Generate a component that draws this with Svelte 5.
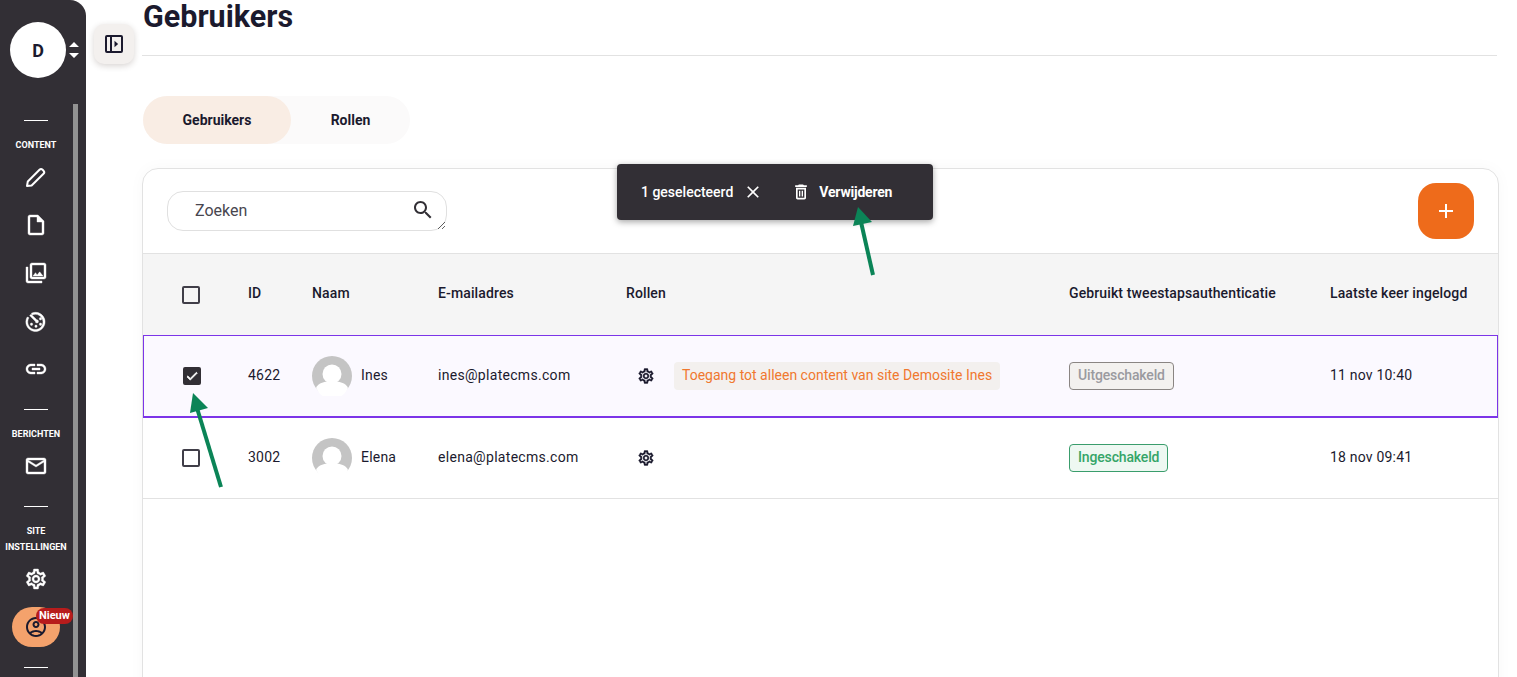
<script lang="ts">
  const icons = {
    file: 'M14 2H6c-1.1 0-1.99.9-1.99 2L4 20c0 1.1.89 2 1.99 2H18c1.1 0 2-.9 2-2V8l-6-6zM6 20V4h7v5h5v11H6z',
    photos: 'M20 4v12H8V4h12m0-2H8c-1.1 0-2 .9-2 2v12c0 1.1.9 2 2 2h12c1.1 0 2-.9 2-2V4c0-1.1-.9-2-2-2zm-8.5 9.67l1.69 2.26 2.48-3.1L19 15H9zM2 6v14c0 1.1.9 2 2 2h14v-2H4V6H2z',
    speed: 'M7.4 4.2A9.6 9.6 0 1 1 3.2 8l1.8.8A7.6 7.6 0 1 0 8.3 6zM5.6 6.6l1.5-1.4 5.7 5.6a1.6 1.6 0 1 1-1.5 1.5zM7.5 14a1.2 1.2 0 1 1 0 2.4 1.2 1.2 0 0 1 0-2.4zM12 16a1.2 1.2 0 1 1 0 2.4 1.2 1.2 0 0 1 0-2.4zM16.5 14a1.2 1.2 0 1 1 0 2.4 1.2 1.2 0 0 1 0-2.4zM16.5 8.6a1.2 1.2 0 1 1 0 2.4 1.2 1.2 0 0 1 0-2.4z',
    link: 'M3.9 12c0-1.71 1.39-3.1 3.1-3.1h4V7H7c-2.76 0-5 2.24-5 5s2.24 5 5 5h4v-1.9H7c-1.71 0-3.1-1.39-3.1-3.1zM8 13h8v-2H8v2zm9-6h-4v1.9h4c1.71 0 3.1 1.39 3.1 3.1s-1.39 3.1-3.1 3.1h-4V17h4c2.76 0 5-2.24 5-5s-2.24-5-5-5z',
    mail: 'M20 4H4c-1.1 0-1.99.9-1.99 2L2 18c0 1.1.9 2 2 2h16c1.1 0 2-.9 2-2V6c0-1.1-.9-2-2-2zm0 14H4V8l8 5 8-5v10zm-8-7L4 6h16l-8 5z',
    gear: 'M19.43 12.98c.04-.32.07-.64.07-.98 0-.34-.03-.66-.07-.98l2.11-1.65c.19-.15.24-.42.12-.64l-2-3.46c-.09-.16-.26-.25-.44-.25-.06 0-.12.01-.17.03l-2.49 1c-.52-.4-1.08-.73-1.69-.98l-.38-2.65C14.46 2.18 14.25 2 14 2h-4c-.25 0-.46.18-.49.42l-.38 2.65c-.61.25-1.17.59-1.69.98l-2.49-1c-.06-.02-.12-.03-.18-.03-.17 0-.34.09-.43.25l-2 3.46c-.13.22-.07.49.12.64l2.11 1.65c-.04.32-.07.65-.07.98 0 .33.03.66.07.98l-2.11 1.65c-.19.15-.24.42-.12.64l2 3.46c.09.16.26.25.44.25.06 0 .12-.01.17-.03l2.49-1c.52.4 1.08.73 1.69.98l.38 2.65c.03.24.24.42.49.42h4c.25 0 .46-.18.49-.42l.38-2.65c.61-.25 1.17-.59 1.69-.98l2.49 1c.06.02.12.03.18.03.17 0 .34-.09.43-.25l2-3.46c.12-.22.07-.49-.12-.64l-2.11-1.65zm-1.98-1.71c.04.31.05.52.05.73 0 .21-.02.43-.05.73l-.14 1.13.89.7 1.08.84-.7 1.21-1.27-.51-1.04-.42-.9.68c-.43.32-.84.56-1.25.73l-1.06.43-.16 1.13-.2 1.35h-1.4l-.19-1.35-.16-1.13-1.06-.43c-.43-.18-.83-.41-1.23-.71l-.91-.7-1.06.43-1.27.51-.7-1.21 1.08-.84.89-.7-.14-1.13c-.03-.31-.05-.54-.05-.74s.02-.43.05-.73l.14-1.13-.89-.7-1.08-.84.7-1.21 1.27.51 1.04.42.9-.68c.43-.32.84-.56 1.25-.73l1.06-.43.16-1.13.2-1.35h1.39l.19 1.35.16 1.13 1.06.43c.43.18.83.41 1.23.71l.91.7 1.06-.43 1.27-.51.7 1.21-1.07.85-.89.7.14 1.13zM12 8c-2.21 0-4 1.79-4 4s1.79 4 4 4 4-1.79 4-4-1.79-4-4-4zm0 6c-1.1 0-2-.9-2-2s.9-2 2-2 2 .9 2 2-.9 2-2 2z',
    account: 'M12 2C6.48 2 2 6.48 2 12s4.48 10 10 10 10-4.48 10-10S17.52 2 12 2zM7.35 18.5C8.66 17.56 10.26 17 12 17s3.34.56 4.65 1.5c-1.31.94-2.91 1.5-4.65 1.5s-3.34-.56-4.65-1.5zm10.79-1.38C16.45 15.8 14.32 15 12 15s-4.45.8-6.14 2.12C4.7 15.73 4 13.95 4 12c0-4.42 3.58-8 8-8s8 3.58 8 8c0 1.95-.7 3.73-1.86 5.12zM12 6c-1.93 0-3.5 1.57-3.5 3.5S10.07 13 12 13s3.5-1.57 3.5-3.5S13.93 6 12 6zm0 5c-.83 0-1.5-.67-1.5-1.5S11.17 8 12 8s1.5.67 1.5 1.5S12.83 11 12 11z',
    search: 'M15.5 14h-.79l-.28-.27C15.41 12.59 16 11.11 16 9.5 16 5.91 13.09 3 9.5 3S3 5.91 3 9.5 5.91 16 9.5 16c1.61 0 3.09-.59 4.23-1.57l.27.28v.79l5 4.99L20.49 19l-4.99-5zm-6 0C7.01 14 5 11.99 5 9.5S7.01 5 9.5 5 14 7.01 14 9.5 11.99 14 9.5 14z',
    trash: 'M16 9v10H8V9h8m-1.5-6h-5l-1 1H5v2h14V4h-3.5l-1-1zM18 7H6v12c0 1.1.9 2 2 2h8c1.1 0 2-.9 2-2V7zM9.6 10.5h1.6v7H9.6zM12.8 10.5h1.6v7h-1.6z',
    close: 'M19 6.41L17.59 5 12 10.59 6.41 5 5 6.41 10.59 12 5 17.59 6.41 19 12 13.41 17.59 19 19 17.59 13.41 12z',
    check: 'M9 16.2L4.8 12l-1.4 1.4L9 19 21 7l-1.4-1.4L9 16.2z',
  };

  const groups = [
    { label: ['CONTENT'], items: ['edit', 'file', 'photos', 'speed', 'link'] },
    { label: ['BERICHTEN'], items: ['mail'] },
    { label: ['SITE', 'INSTELLINGEN'], items: ['gear'] },
  ];

  const users = [
    { id: 4622, name: 'Ines', email: 'ines@platecms.com', role: 'Toegang tot alleen content van site Demosite Ines', tfa: false, last: '11 nov 10:40', selected: true },
    { id: 3002, name: 'Elena', email: 'elena@platecms.com', role: '', tfa: true, last: '18 nov 09:41', selected: false },
  ];
</script>

{#snippet icon(name, size = 24)}
  <svg class="icon" width={size} height={size} viewBox="0 0 24 24" fill="currentColor"><path d={icons[name]} /></svg>
{/snippet}

<div class="page">
  <aside class="sidebar">
    <div class="site">
      <div class="site-avatar">D</div>
      <svg class="sort" width="12" height="24" viewBox="0 0 12 24" fill="currentColor">
        <path d="M6 4l5 5H1zM1 15h10l-5 5z" />
      </svg>
    </div>
    <div class="side-body">
      <nav class="nav">
        {#each groups as group}
          <div class="rule"></div>
          <div class="group-label">
            {#each group.label as line}<div>{line}</div>{/each}
          </div>
          {#each group.items as item}
            <div class="nav-item">
              {#if item === 'edit'}
                <svg class="icon" width="24" height="24" viewBox="0 0 24 24" fill="none" stroke="currentColor" stroke-width="2" stroke-linejoin="round">
                  <path d="M3 21l.8-4.5L15.5 4.8a2.2 2.2 0 0 1 3.1 0l.9.9a2.2 2.2 0 0 1 0 3.1L7.6 20.5z" />
                </svg>
              {:else}
                {@render icon(item)}
              {/if}
            </div>
          {/each}
        {/each}
        <div class="nav-account">
          {@render icon('account')}
          <span class="new-badge">Nieuw</span>
        </div>
        <div class="rule last"></div>
      </nav>
      <div class="thumb"></div>
    </div>
  </aside>

  <button class="toggle" aria-label="Zijbalk">
    <svg width="20" height="20" viewBox="0 0 20 20" fill="none" stroke="currentColor" stroke-width="2">
      <rect x="2" y="2" width="16" height="16" rx="1" />
      <path d="M7 2v16" />
      <path d="M10.5 6.8l3.6 3.2-3.6 3.2z" fill="currentColor" stroke="none" />
    </svg>
  </button>

  <main class="main">
    <h1>Gebruikers</h1>
    <div class="tabs">
      <div class="tab active">Gebruikers</div>
      <div class="tab">Rollen</div>
    </div>

    <section class="card">
      <div class="card-top">
        <div class="search">
          <textarea placeholder="Zoeken" rows="1"></textarea>
          <span class="search-icon">{@render icon('search')}</span>
        </div>
        <button class="add" aria-label="Toevoegen">
          <svg width="16" height="16" viewBox="0 0 16 16" fill="none" stroke="currentColor" stroke-width="2"><path d="M8 1v14M1 8h14" /></svg>
        </button>
      </div>

      <div class="row head">
        <div><span class="checkbox"></span></div>
        <div class="txt">ID</div>
        <div class="txt">Naam</div>
        <div class="txt">E-mailadres</div>
        <div class="txt">Rollen</div>
        <div class="txt">Gebruikt tweestapsauthenticatie</div>
        <div class="txt">Laatste keer ingelogd</div>
      </div>

      {#each users as user}
        <div class="row body" class:selected={user.selected}>
          <div>
            {#if user.selected}
              <span class="checkbox checked">{@render icon('check', 14)}</span>
            {:else}
              <span class="checkbox"></span>
            {/if}
          </div>
          <div class="txt">{user.id}</div>
          <div class="name">
            <svg class="avatar" width="40" height="40" viewBox="0 0 40 40">
              <circle cx="20" cy="20" r="20" fill="#c4c4c4" />
              <circle cx="20" cy="18" r="9.5" fill="#fff" />
              <path d="M4 32c2-5 9-7 16-7s14 2 16 7a21 21 0 0 1-4 6l-4 3H12l-4-3z" fill="#fff" />
            </svg>
            <span class="txt">{user.name}</span>
          </div>
          <div class="txt email">{user.email}</div>
          <div class="roles">
            <span class="role-gear">{@render icon('gear', 18)}</span>
            {#if user.role}<span class="role-tag">{user.role}</span>{/if}
          </div>
          <div>
            <span class="status" class:on={user.tfa}>{user.tfa ? 'Ingeschakeld' : 'Uitgeschakeld'}</span>
          </div>
          <div class="txt">{user.last}</div>
        </div>
      {/each}
    </section>
  </main>

  <div class="bulk">
    <span class="bulk-count">1 geselecteerd</span>
    <span class="bulk-close">{@render icon('close', 20)}</span>
    <span class="bulk-trash">{@render icon('trash', 20)}</span>
    <span class="bulk-delete">Verwijderen</span>
  </div>

  <!-- annotation arrows -->
  <svg class="arrows" width="1517" height="677" viewBox="0 0 1517 677" fill="#0b8457">
    <path d="M873 275L861 222" stroke="#0b8457" stroke-width="4" />
    <polygon points="858,207 853,226 872,222" />
    <path d="M221 487L197 408" stroke="#0b8457" stroke-width="4" />
    <polygon points="193,393 190,413 208,408" />
  </svg>
</div>

<style>
  :global(body) {
    margin: 0;
    background: #fff;
  }

  .page {
    position: relative;
    display: flex;
    height: 677px;
    overflow: hidden;
    font-family: Roboto, sans-serif;
    font-size: 14px;
    color: #1b1a2e;
  }

  .icon {
    display: block;
  }

  .sidebar {
    flex: none;
    display: flex;
    flex-direction: column;
    width: 86px;
    background: #322f35;
    color: #fff;
    border-top-right-radius: 16px;
  }

  .site {
    flex: none;
    display: flex;
    align-items: center;
    height: 56px;
    padding: 22px 0 26px 10px;
    gap: 2px;
  }

  .site-avatar {
    display: flex;
    align-items: center;
    justify-content: center;
    width: 56px;
    height: 56px;
    border-radius: 50%;
    background: #fff;
    color: #1b1a2e;
    font-size: 18px;
    font-weight: 700;
  }

  .side-body {
    flex: 1;
    display: flex;
    min-height: 0;
  }

  .nav {
    width: 72px;
    margin-right: 1px;
    display: flex;
    flex-direction: column;
    align-items: center;
  }

  .thumb {
    width: 5px;
    background: #929292;
  }

  .rule {
    flex: none;
    width: 24px;
    height: 1px;
    margin-top: 16px;
    background: #fff;
  }

  .rule.last {
    margin-top: 20px;
  }

  .group-label {
    margin-top: 16px;
    font-size: 9px;
    line-height: 16px;
    font-weight: 700;
    text-align: center;
    white-space: nowrap;
  }

  .nav-item {
    flex: none;
    display: flex;
    align-items: center;
    justify-content: center;
    height: 48px;
    width: 48px;
  }

  .nav-item .icon path {
    stroke: currentColor;
    stroke-width: 0.4;
  }

  .nav-item svg[fill='none'] path {
    stroke-width: 2;
  }

  .nav-account {
    position: relative;
    flex: none;
    display: flex;
    align-items: center;
    justify-content: center;
    width: 48px;
    height: 40px;
    margin-top: 4px;
    border-radius: 20px;
    background: #f4a26c;
    color: #1b1a2e;
  }

  .new-badge {
    position: absolute;
    top: 1px;
    left: 24px;
    height: 16px;
    padding: 0 3px;
    border-radius: 8px;
    background: #b71c1c;
    color: #fff;
    font-size: 11px;
    line-height: 16px;
    font-weight: 700;
  }

  .toggle {
    flex: none;
    align-self: flex-start;
    display: flex;
    align-items: center;
    justify-content: center;
    width: 40px;
    height: 40px;
    margin: 24px 0 0 8px;
    padding: 0;
    border: 0;
    border-radius: 10px;
    background: #f3f0ee;
    color: #1b1a2e;
    box-shadow: 0 2px 6px rgba(60, 40, 30, 0.2);
  }

  .main {
    flex: 1;
    min-width: 0;
    padding: 0 20px 0 8px;
  }

  h1 {
    margin: 0;
    height: 55px;
    border-bottom: 1px solid #e2e2e2;
    padding-left: 1px;
    font-size: 30.5px;
    line-height: 34px;
    font-weight: 700;
  }

  .tabs {
    display: flex;
    width: 267px;
    margin-top: 40px;
    margin-left: 1px;
    border-radius: 24px;
    background: #fbfafa;
  }

  .tab {
    width: 119px;
    height: 48px;
    display: flex;
    align-items: center;
    justify-content: center;
    font-weight: 700;
  }

  .tab.active {
    width: 148px;
    border-radius: 24px;
    background: #f9ede4;
  }

  .card {
    width: 1355px;
    height: 600px;
    margin-top: 24px;
    border: 1px solid #e2e2e2;
    border-radius: 16px;
    box-shadow: 0 0 16px rgba(0, 0, 0, 0.03);
  }

  .card-top {
    display: flex;
    align-items: center;
    justify-content: space-between;
    height: 84px;
    padding: 0 24px;
    border-bottom: 1px solid #e2e2e2;
  }

  .search {
    position: relative;
    width: 280px;
    height: 40px;
  }

  textarea {
    box-sizing: border-box;
    display: block;
    width: 280px;
    height: 40px;
    padding: 9px 44px 9px 27px;
    border: 1px solid #e0e0e0;
    border-radius: 16px;
    background: #fff;
    font: 16px/20px Roboto, sans-serif;
    color: #1b1a2e;
    outline: none;
  }

  textarea::placeholder {
    color: #48464f;
  }

  .search-icon {
    position: absolute;
    top: 7px;
    right: 12px;
    color: #322f35;
  }

  .add {
    display: flex;
    align-items: center;
    justify-content: center;
    width: 56px;
    height: 56px;
    padding: 0;
    border: 0;
    border-radius: 18px;
    background: #ee6b1b;
    color: #fff;
  }

  .row {
    box-sizing: border-box;
    display: grid;
    grid-template-columns: 66px 64px 126px 188px 443px 261px 1fr;
    align-items: center;
    padding-left: 39px;
  }

  .row.head {
    height: 81px;
    background: #f5f5f5;
    font-weight: 500;
    letter-spacing: 0.12px;
  }

  .row.head .txt {
    padding-bottom: 3px;
  }

  .row.body {
    height: 81px;
    border-bottom: 1px solid #e2e2e2;
    letter-spacing: 0.2px;
  }

  .row.body .txt {
    padding-bottom: 2px;
  }

  .row.body .email {
    letter-spacing: 0.3px;
  }

  .row.selected {
    height: 83px;
    padding-left: 38px;
    border: 1px solid #7c35e8;
    border-bottom-width: 2px;
    background: #fbf9ff;
  }

  .checkbox {
    box-sizing: border-box;
    display: block;
    width: 18px;
    height: 18px;
    border: 2px solid #403e48;
    border-radius: 2px;
  }

  .checkbox.checked {
    display: flex;
    align-items: center;
    justify-content: center;
    margin-left: 1px;
    background: #322f35;
    border-color: #322f35;
    color: #fff;
  }

  .checkbox.checked path {
    stroke: currentColor;
    stroke-width: 1.5;
  }

  .name {
    display: flex;
    align-items: center;
    gap: 9px;
  }

  .avatar {
    flex: none;
  }

  .roles {
    display: flex;
    align-items: center;
    letter-spacing: 0;
  }

  .role-gear {
    margin-left: 11px;
    margin-right: 19px;
  }

  .role-gear path {
    stroke: currentColor;
    stroke-width: 0.5;
  }

  .role-tag {
    height: 28px;
    padding: 0 8px;
    line-height: 26px;
    border-radius: 4px;
    background: #f3f0ee;
    color: #f0782f;
    white-space: nowrap;
  }

  .status {
    box-sizing: border-box;
    display: inline-block;
    height: 28px;
    padding: 0 8px;
    line-height: 24px;
    border: 1px solid #8a8583;
    border-radius: 4px;
    background: #f3f1ef;
    color: #9a9a9f;
    font-weight: 500;
    letter-spacing: -0.15px;
  }

  .status.on {
    border-color: #3a9d6c;
    background: #eef8f2;
    color: #35a568;
  }

  .bulk {
    position: absolute;
    top: 164px;
    left: 617px;
    box-sizing: border-box;
    display: flex;
    align-items: center;
    width: 316px;
    height: 56px;
    padding-left: 24px;
    border-radius: 4px;
    background: #322f35;
    color: #fff;
    box-shadow: 0 2px 6px rgba(0, 0, 0, 0.35);
  }

  .bulk-count {
    font-weight: 500;
    font-size: 14px;
  }

  .bulk-close {
    margin-left: 10px;
  }

  .bulk-trash {
    margin-left: 28px;
  }

  .bulk-delete {
    margin-left: 8px;
    font-weight: 700;
    letter-spacing: -0.2px;
  }

  .arrows {
    position: absolute;
    top: 0;
    left: 0;
    pointer-events: none;
  }
</style>
